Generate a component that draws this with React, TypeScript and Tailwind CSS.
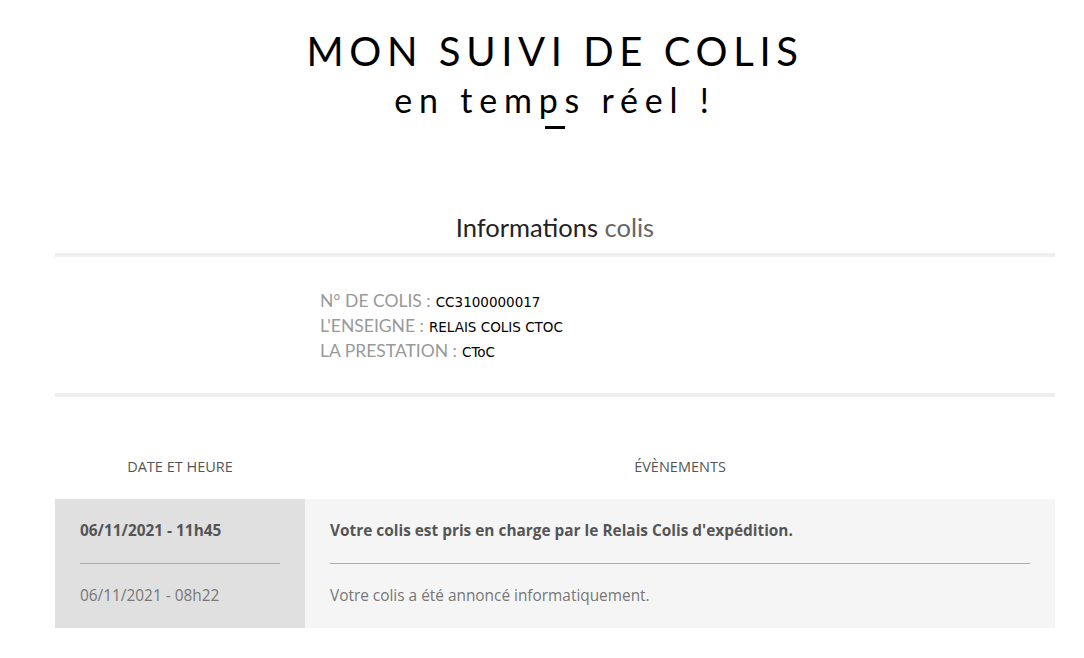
import React from 'react';

interface TrackingEvent {
  id: string;
  date: string;
  label: string;
  latest: boolean;
}

const events: TrackingEvent[] = [
  { id: '1', date: '06/11/2021 - 11h45', label: "Votre colis est pris en charge par le Relais Colis d'expédition.", latest: true },
  { id: '2', date: '06/11/2021 - 08h22', label: 'Votre colis a été annoncé informatiquement.', latest: false },
];

const infos = [
  { label: 'N° DE COLIS :', value: 'CC3100000017' },
  { label: "L'ENSEIGNE :", value: 'RELAIS COLIS CTOC' },
  { label: 'LA PRESTATION :', value: 'CToC' },
];

const App: React.FC = () => {
  return (
    <div className="min-h-[658px] bg-white pl-[55px] font-['Lato',sans-serif]">
      <div className="w-[1000px]">
        <header className="pt-[25px] text-center text-black">
          <h1 className="text-[40px] font-normal leading-[52px] tracking-[0.14em]">MON SUIVI DE COLIS</h1>
          <p className="text-[34px] leading-[46px] tracking-[0.2em]">en temps réel !</p>
          <div className="mx-auto mt-[3px] h-[3px] w-[20px] bg-black" />
        </header>

        <h2 className="mt-[83px] text-center text-[25.5px] leading-[30px] text-[#222]">
          Informations <span className="text-[#666]">colis</span>
        </h2>
        <div className="mt-[11px] h-[4px] bg-[#eeeeee]" />

        <div className="pt-[31px] pb-[30px] pl-[265px]">
          {infos.map((info) => (
            <div key={info.label} className="flex h-[25px] items-baseline">
              <span className="text-[17.5px] text-[#999]">{info.label}</span>
              <span className="ml-[5px] font-['DejaVu_Sans',sans-serif] text-[13.5px] text-black">{info.value}</span>
            </div>
          ))}
        </div>
        <div className="h-[4px] bg-[#eeeeee]" />

        <div className="mt-[59px] flex font-['Open_Sans',sans-serif] text-[14.5px] text-[#555]">
          <div className="w-[250px] text-center">DATE ET HEURE</div>
          <div className="flex-1 text-center">ÉVÈNEMENTS</div>
        </div>

        <div className="mt-[21px] flex font-['Open_Sans',sans-serif] text-[15.4px] text-[#555]">
          <div className="w-[250px] bg-[#e0e0e0] px-[25px]">
            {events.map((ev, i) => (
              <div
                key={ev.id}
                className={`flex items-center ${i < events.length - 1 ? 'h-[65px] border-b border-[#aaa]' : 'h-[64px]'} ${ev.latest ? 'font-bold' : 'text-[#777]'}`}
              >
                {ev.date}
              </div>
            ))}
          </div>
          <div className="flex-1 bg-[#f5f5f5] px-[25px]">
            {events.map((ev, i) => (
              <div
                key={ev.id}
                className={`flex items-center ${i < events.length - 1 ? 'h-[65px] border-b border-[#aaa]' : 'h-[64px]'} ${ev.latest ? 'font-bold' : 'text-[#777]'}`}
              >
                {ev.label}
              </div>
            ))}
          </div>
        </div>
      </div>
    </div>
  );
};

export default App;
